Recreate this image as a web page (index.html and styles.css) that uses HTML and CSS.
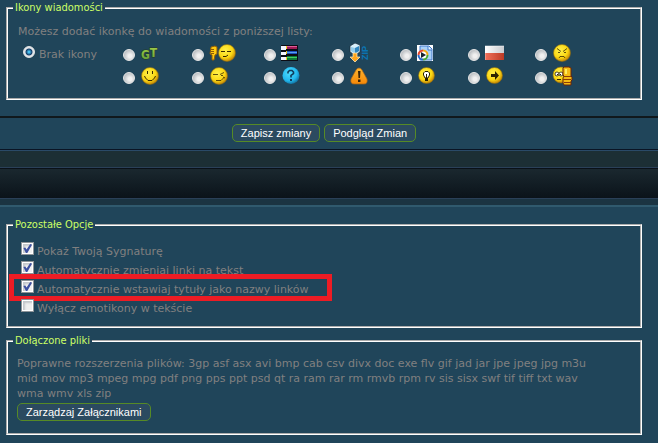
FILE: index.html
```html
<!DOCTYPE html>
<html lang="pl">

<head>
    <meta charset="UTF-8">
    <meta name="viewport" content="width=device-width, initial-scale=1.0">
    <title>Opcje wiadomości</title>
    <link rel="stylesheet" href="styles.css">
</head>

<body>
    <!-- shared gradients -->
    <svg class="defs" width="0" height="0" aria-hidden="true">
        <defs>
            <radialGradient id="yellow" cx="0.4" cy="0.35" r="0.65">
                <stop offset="0" stop-color="#fff04a" />
                <stop offset="0.65" stop-color="#fbd814" />
                <stop offset="1" stop-color="#c88a06" />
            </radialGradient>
            <radialGradient id="blue" cx="0.4" cy="0.35" r="0.65">
                <stop offset="0" stop-color="#4fdcff" />
                <stop offset="0.7" stop-color="#22b8ee" />
                <stop offset="1" stop-color="#1479a8" />
            </radialGradient>
            <linearGradient id="orange" x1="0" y1="0" x2="0" y2="1">
                <stop offset="0" stop-color="#ffb52e" />
                <stop offset="1" stop-color="#f58808" />
            </linearGradient>
            <linearGradient id="green" x1="0" y1="0" x2="0" y2="1">
                <stop offset="0" stop-color="#a3cf4a" />
                <stop offset="1" stop-color="#5f9a34" />
            </linearGradient>
            <linearGradient id="flag-white" x1="0" y1="0" x2="1" y2="0">
                <stop offset="0" stop-color="#ffffff" />
                <stop offset="1" stop-color="#c9cbd0" />
            </linearGradient>
            <linearGradient id="flag-red" x1="0" y1="0" x2="1" y2="0">
                <stop offset="0" stop-color="#f0705a" />
                <stop offset="1" stop-color="#bc3a26" />
            </linearGradient>
        </defs>
    </svg>

    <form>
        <section class="panel">
            <fieldset>
                <legend>Ikony wiadomości</legend>
                <p class="hint">Możesz dodać ikonkę do wiadomości z poniższej listy:</p>
                <div class="icons">
                    <label class="no-icon"><input type="radio" name="icon" checked> Brak ikony</label>

                    <label><input type="radio" name="icon" aria-label="GT">
                        <svg class="gt" width="20" height="20" viewBox="0 0 20 20">
                            <text x="1" y="16">G<tspan dy="-2">T</tspan></text>
                        </svg>
                    </label>
                    <label><input type="radio" name="icon" aria-label="Kciuk w dół">
                        <svg width="28" height="20" viewBox="0 0 28 20">
                            <path d="M2 4L6 3L8 4V11L6 12L5 17L3 17L3 12L1 11Z" fill="#ffc90e" stroke="#8c5c08" />
                            <path d="M2 6.500H5M2 8.500H5M2 10.500H5" stroke="#8c5c08" />
                            <circle cx="18" cy="10" r="8.500" fill="url(#yellow)" stroke="#8a6a10" stroke-width="0.600" />
                            <path d="M12 8.500H16M18 8.500H22M14 13.500H17L19 12" fill="none" stroke="#3a2a00" />
                        </svg>
                    </label>
                    <label><input type="radio" name="icon" aria-label="RAR">
                        <svg width="20" height="20" viewBox="0 0 20 20">
                            <path d="M0 2H17V18H0Z" fill="#0c0c14" />
                            <path d="M0 3H5V7H0ZM0 9H5V12H0ZM0 14H5V17H0Z" fill="#f4f4ff" />
                            <path d="M6 3H16V6H6Z" fill="#a01c56" />
                            <path d="M6 3H16V4H6Z" fill="#e05c98" />
                            <path d="M6 8H16V11H6Z" fill="#1c50c0" />
                            <path d="M6 9H16V10H6Z" fill="#58a0f0" />
                            <path d="M6 13H16V17H6Z" fill="#107a3a" />
                            <path d="M6 14H16V15H6Z" fill="#40d060" />
                            <path d="M5 3H6V6H5ZM5 8H6V11H5ZM5 14H6V17H5Z" fill="#f4d020" />
                        </svg>
                    </label>
                    <label><input type="radio" name="icon" aria-label="ZIP">
                        <svg class="zip" width="20" height="20" viewBox="0 0 20 20">
                            <path d="M1 3L6 0L11 2V9L6 12L1 9Z" fill="#d8f0fc" stroke="#1b2c3a" stroke-width="0.700" />
                            <path d="M6 5L10 3V8L6 11Z" fill="#2f86c0" />
                            <path d="M2 4L6 5V11L2 8Z" fill="#94cdec" />
                            <path d="M4 10H8V14H11L6 19L1 14H4Z" fill="#ffa51c" stroke="#fff0c8" stroke-width="0.700" />
                            <text x="-17" y="19" transform="rotate(-90)">ZIP</text>
                        </svg>
                    </label>
                    <label><input type="radio" name="icon" aria-label="Media">
                        <svg width="20" height="20" viewBox="0 0 20 20">
                            <path d="M0 2H16V18H0Z" fill="#fff" />
                            <path d="M3 3H12L15 6V17H3Z" fill="#a8d0f8" stroke="#4078c8" />
                            <path d="M11 3V7H15" fill="#e8f4ff" stroke="#4078c8" />
                            <circle cx="6" cy="12" r="5" fill="#fff" />
                            <path d="M1.500 12A4.500 4.500 0 0 1 6 7.500" fill="none" stroke="#e8482c" stroke-width="2" />
                            <path d="M6 7.500A4.500 4.500 0 0 1 10.500 12" fill="none" stroke="#f0a818" stroke-width="2" />
                            <path d="M10.500 12A4.500 4.500 0 0 1 6 16.500" fill="none" stroke="#48a838" stroke-width="2" />
                            <path d="M6 16.500A4.500 4.500 0 0 1 1.500 12" fill="none" stroke="#2868c8" stroke-width="2" />
                            <path d="M4 9L9 12L4 15Z" fill="#16202c" />
                        </svg>
                    </label>
                    <label><input type="radio" name="icon" aria-label="Flaga Polski">
                        <svg width="20" height="20" viewBox="0 0 20 20">
                            <path d="M0 3H19V10H0Z" fill="url(#flag-white)" />
                            <path d="M0 10H19V17H0Z" fill="url(#flag-red)" />
                            <path d="M0 17V3H19" fill="none" stroke="#fff" stroke-opacity="0.500" />
                        </svg>
                    </label>
                    <label><input type="radio" name="icon" aria-label="Zły">
                        <svg width="20" height="20" viewBox="0 0 20 20">
                            <circle cx="10" cy="10" r="8.500" fill="url(#yellow)" stroke="#8a6a10" stroke-width="0.600" />
                            <path d="M5 5.500L9 8.500M15 5.500L11 8.500M6 9.500H8M12 9.500H14M7 15L8 13.500H12L13 15" fill="none" stroke="#3a2a00" stroke-width="0.800" />
                        </svg>
                    </label>

                    <label class="second-row"><input type="radio" name="icon" aria-label="Uśmiech">
                        <svg width="20" height="20" viewBox="0 0 20 20">
                            <circle cx="10" cy="10" r="8.500" fill="url(#yellow)" stroke="#8a6a10" stroke-width="0.600" />
                            <path d="M7.500 5V8M12.500 5V8M4.500 10L5.500 12L8 14.500H12L14.500 12L15.500 10" fill="none" stroke="#3a2a00" />
                        </svg>
                    </label>
                    <label><input type="radio" name="icon" aria-label="Chytry">
                        <svg width="20" height="20" viewBox="0 0 20 20">
                            <circle cx="10" cy="10" r="8.500" fill="url(#yellow)" stroke="#8a6a10" stroke-width="0.600" />
                            <path d="M4 8.500H9M11 8.500L15 6.500M12 9.500H14M7 14.500H12L15 11.500M14 11L16 12" fill="none" stroke="#3a2a00" stroke-width="0.800" />
                        </svg>
                    </label>
                    <label><input type="radio" name="icon" aria-label="Pytanie">
                        <svg width="20" height="20" viewBox="0 0 20 20">
                            <circle cx="10" cy="9.500" r="8.500" fill="url(#blue)" />
                            <path d="M7 7.500V6L8.500 4.500H11L12.500 6V7.500L10 9.500V11.500" fill="none" stroke="#103c5c" stroke-width="1.600" />
                            <path d="M9 13H11V15H9Z" fill="#103c5c" />
                        </svg>
                    </label>
                    <label><input type="radio" name="icon" aria-label="Uwaga">
                        <svg width="20" height="20" viewBox="0 0 20 20">
                            <path d="M10 2Q12 2 13 4L18 13Q19 18 15 18H5Q1 18 2 13L7 4Q8 2 10 2Z" fill="url(#orange)" stroke="#a86418" stroke-width="0.700" />
                            <path d="M9 5H11.500L11 12H9.500ZM9 13.500H11.500V16H9Z" fill="#3a2408" />
                        </svg>
                    </label>
                    <label><input type="radio" name="icon" aria-label="Pomysł">
                        <svg width="20" height="20" viewBox="0 0 20 20">
                            <circle cx="9.500" cy="9.500" r="8" fill="url(#yellow)" stroke="#8a6a10" stroke-width="0.600" />
                            <path d="M8 12L6.500 9V7L8 5.500H11L12.500 7V9L11 12Z" fill="#fff" stroke="#2a2000" />
                            <path d="M8 12H11V15H8ZM9 8H10V12H9Z" fill="#2a2000" />
                        </svg>
                    </label>
                    <label><input type="radio" name="icon" aria-label="Strzałka">
                        <svg width="20" height="20" viewBox="0 0 20 20">
                            <circle cx="9.500" cy="9.500" r="8" fill="url(#yellow)" stroke="#8a6a10" stroke-width="0.600" />
                            <path d="M6 8H10V5L14 9.500L10 14V11H6Z" fill="#2e2400" />
                        </svg>
                    </label>
                    <label><input type="radio" name="icon" aria-label="Brawo">
                        <svg width="22" height="20" viewBox="0 0 22 20">
                            <circle cx="9" cy="9" r="8" fill="url(#yellow)" stroke="#8a6a10" stroke-width="0.600" />
                            <circle cx="5" cy="8" r="2" fill="#fff" stroke="#2a2000" stroke-width="0.800" />
                            <circle cx="9" cy="8" r="2" fill="#fff" stroke="#2a2000" stroke-width="0.800" />
                            <path d="M5 8H6V9H5ZM8 8H9V9H8Z" fill="#2a2000" />
                            <path d="M5 13.500H9" stroke="#3a2a00" />
                            <path d="M12 1H17L19 2V10L20 11V14L19 15V19H12L11 17V12L12 10L11 9V2Z" fill="#f4bc14" stroke="#6a2408" />
                            <path d="M13 3H15V8H13Z" fill="#ffe95c" />
                            <path d="M12 10.500H19M11 13.500H19M12 16.500H19" stroke="#8a3c08" />
                        </svg>
                    </label>
                </div>
            </fieldset>
        </section>

        <div class="actions">
            <button type="submit">Zapisz zmiany</button>
            <button type="button">Podgląd Zmian</button>
        </div>

        <div class="strip"></div>
        <div class="header-bar"></div>
        <div class="sub-bar"></div>

        <section class="panel">
            <fieldset class="options">
                <legend>Pozostałe Opcje</legend>
                <label><input type="checkbox" checked> <span>Pokaż Twoją Sygnaturę</span></label>
                <label><input type="checkbox" checked> <span>Automatycznie zmieniaj linki na tekst</span></label>
                <label class="marked"><input type="checkbox" checked> <span>Automatycznie wstawiaj tytuły jako nazwy linków</span></label>
                <label><input type="checkbox"> <span>Wyłącz emotikony w tekście</span></label>
            </fieldset>

            <fieldset class="files">
                <legend>Dołączone pliki</legend>
                <p>Poprawne rozszerzenia plików: 3gp asf asx avi bmp cab csv divx doc exe flv gif jad jar jpe jpeg jpg m3u mid mov mp3 mpeg mpg pdf png pps ppt psd qt ra ram rar rm rmvb rpm rv sis sisx swf tif tiff txt wav wma wmv xls zip</p>
                <button type="button">Zarządzaj Załącznikami</button>
            </fieldset>
        </section>
    </form>
</body>

</html>
```
FILE: styles.css
```css
body {
    margin: 0;
    background-color: #20455a;
    color: #808080;
    font-family: Verdana, "DejaVu Sans", sans-serif;
    font-size: 11px;
    line-height: 15px;
}

.defs {
    position: absolute;
}

.panel {
    padding: 1px 16px 8px 6px;
}

.panel:first-child {
    padding-bottom: 16px;
}

fieldset {
    margin: 0;
    padding: 0 5px 12px;
    border: 2px groove #fff;
    min-width: 0;
}

legend {
    padding: 0 2px;
    color: #ccff66;
    font-family: Tahoma, "DejaVu Sans Condensed", sans-serif;
    line-height: 14px;
}

p {
    margin: 0;
}

/* message icons */
.hint {
    padding: 9px 5px 4px;
}

.icons {
    display: grid;
    grid-template-columns: 105px 69px 72px 68px 68px 68px 67px 40px;
    row-gap: 2px;
    padding-left: 5px;
}

.icons label {
    display: flex;
    align-items: flex-end;
    gap: 5px;
    height: 20px;
}

.icons .no-icon {
    align-items: center;
    gap: 4px;
    padding: 1px 0 0 5px;
}

.icons .second-row {
    grid-column: 2;
}

.gt text {
    fill: url(#green);
    stroke: #243a20;
    stroke-width: 1px;
    paint-order: stroke;
    font-family: "DejaVu Sans Condensed", sans-serif;
    font-size: 12px;
    font-weight: bold;
}

.zip text {
    fill: #0a75b4;
    font-family: Arial, "Liberation Sans", sans-serif;
    font-size: 9px;
    font-weight: bold;
}

input[type="radio"] {
    appearance: none;
    flex: none;
    width: 12px;
    height: 12px;
    margin: 0 0 2px;
    border: 1px solid #e8e8e8;
    border-radius: 50%;
    background: radial-gradient(circle at 60% 60%, #f0f0f0 20%, #b8bcc0 75%);
}

input[type="radio"]:checked {
    margin-bottom: 4px;
    background: radial-gradient(circle at 50% 50%, #48c0f0 10%, #143c68 42%, #e0e4e8 56%);
}

/* buttons */
.actions {
    display: flex;
    justify-content: center;
    gap: 4px;
    padding: 6px 10px 7px 0;
    border-top: 2px solid #10181c;
    border-bottom: 1px solid #0a1424;
}

button {
    height: 18px;
    padding: 0 8px;
    border: 1px solid #568a26;
    border-radius: 5px;
    background-color: #2b4a60;
    color: #fff;
    font-family: Arial, "Liberation Sans", sans-serif;
    font-size: 11px;
    line-height: 16px;
    cursor: pointer;
}

/* bars between the posts */
.strip {
    height: 16px;
    border-top: 1px solid #2a4a68;
    border-bottom: 1px solid #2a4058;
    background-color: #1c2f35;
}

.header-bar {
    height: 29px;
    border-top: 1px solid #0a1118;
    border-bottom: 1px solid #2a4058;
    background: linear-gradient(#1a282f, #0b131a);
}

.sub-bar {
    height: 6px;
    border-bottom: 2px solid #305a6e;
    background-color: #1b3442;
}

/* other options */
.sub-bar + .panel {
    padding-top: 11px;
}

.options {
    padding: 10px 5px 8px;
    margin-bottom: 6px;
}

.options label {
    display: flex;
    position: relative;
    width: fit-content;
    gap: 3px;
    height: 19px;
    padding-left: 8px;
}

.options span {
    padding-top: 2px;
}

.options .marked::after {
    content: "";
    position: absolute;
    top: -6px;
    right: -23px;
    bottom: -2px;
    left: -4px;
    border: 5px solid #ed1c24;
}

input[type="checkbox"] {
    appearance: none;
    flex: none;
    width: 13px;
    height: 13px;
    margin: 0;
    border: 1px solid #8e9498;
    background-color: #f0f0f0;
    box-shadow: inset 0 0 0 1px #fff, inset 2px 2px 2px 1px #c4c8cc;
}

input[type="checkbox"]:checked::before {
    content: "";
    display: block;
    width: 9px;
    height: 9px;
    margin: 1px;
    background-color: #3c50a0;
    clip-path: polygon(5% 45%, 25% 40%, 40% 62%, 80% 0, 100% 8%, 48% 100%, 32% 100%);
}

/* attachments */
.files p {
    padding: 8px 30px 2px 4px;
}

.files button {
    display: block;
    margin-left: 4px;
}
```
